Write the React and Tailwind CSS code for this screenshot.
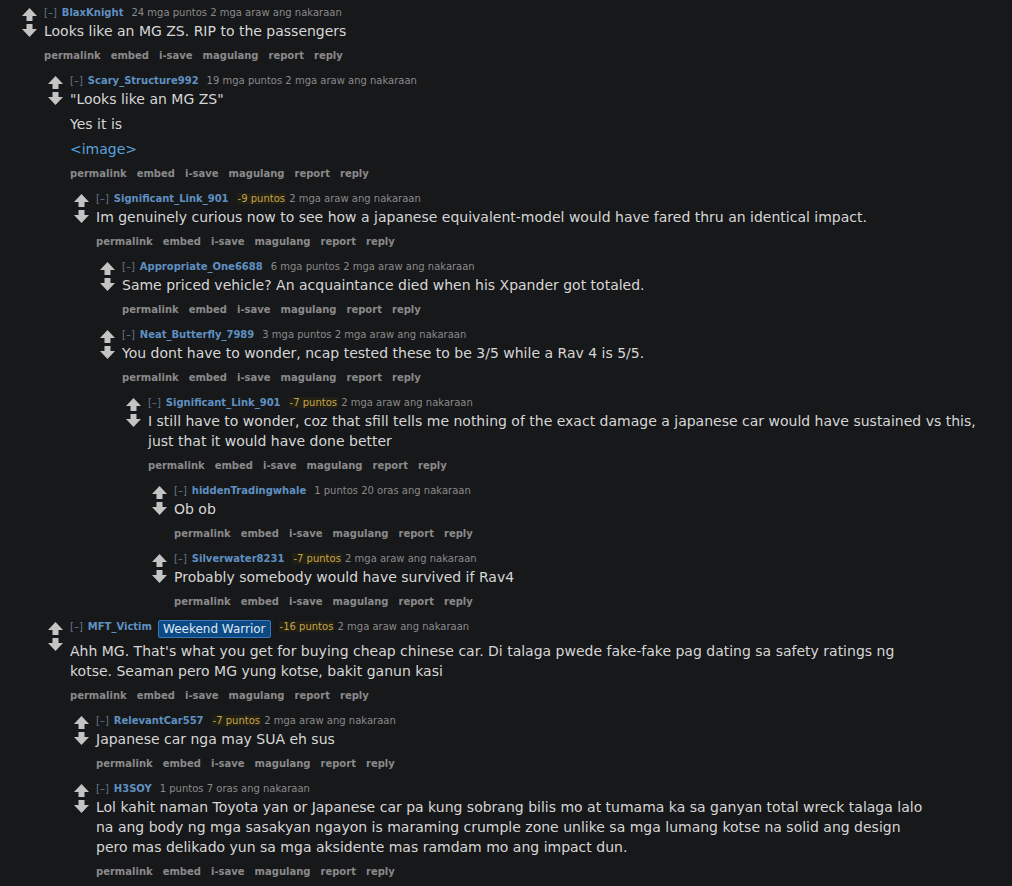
import React from "react";

const INDENT = ["ml-[22px]", "ml-[48px]", "ml-[74px]", "ml-[100px]", "ml-[126px]", "ml-[152px]"];

const comments = [
  {
    level: 0,
    user: "BlaxKnight",
    score: "24 mga puntos",
    time: "2 mga araw ang nakaraan",
    body: ["Looks like an MG ZS. RIP to the passengers"],
  },
  {
    level: 1,
    user: "Scary_Structure992",
    score: "19 mga puntos",
    time: "2 mga araw ang nakaraan",
    body: ['"Looks like an MG ZS"', "Yes it is", { link: "<image>" }],
  },
  {
    level: 2,
    user: "Significant_Link_901",
    score: "-9 puntos",
    neg: true,
    time: "2 mga araw ang nakaraan",
    body: [
      "Im genuinely curious now to see how a japanese equivalent-model would have fared thru an identical impact.",
    ],
  },
  {
    level: 3,
    user: "Appropriate_One6688",
    score: "6 mga puntos",
    time: "2 mga araw ang nakaraan",
    body: ["Same priced vehicle? An acquaintance died when his Xpander got totaled."],
  },
  {
    level: 3,
    user: "Neat_Butterfly_7989",
    score: "3 mga puntos",
    time: "2 mga araw ang nakaraan",
    body: ["You dont have to wonder, ncap tested these to be 3/5 while a Rav 4 is 5/5."],
  },
  {
    level: 4,
    user: "Significant_Link_901",
    score: "-7 puntos",
    neg: true,
    time: "2 mga araw ang nakaraan",
    body: [
      "I still have to wonder, coz that sfill tells me nothing of the exact damage a japanese car would have sustained vs this, just that it would have done better",
    ],
  },
  {
    level: 5,
    user: "hiddenTradingwhale",
    score: "1 puntos",
    time: "20 oras ang nakaraan",
    body: ["Ob ob"],
  },
  {
    level: 5,
    user: "Silverwater8231",
    score: "-7 puntos",
    neg: true,
    time: "2 mga araw ang nakaraan",
    body: ["Probably somebody would have survived if Rav4"],
  },
  {
    level: 1,
    user: "MFT_Victim",
    flair: "Weekend Warrior",
    score: "-16 puntos",
    neg: true,
    time: "2 mga araw ang nakaraan",
    body: [
      "Ahh MG. That's what you get for buying cheap chinese car. Di talaga pwede fake-fake pag dating sa safety ratings ng kotse. Seaman pero MG yung kotse, bakit ganun kasi",
    ],
  },
  {
    level: 2,
    user: "RelevantCar557",
    score: "-7 puntos",
    neg: true,
    time: "2 mga araw ang nakaraan",
    body: ["Japanese car nga may SUA eh sus"],
  },
  {
    level: 2,
    user: "H3SOY",
    score: "1 puntos",
    time: "7 oras ang nakaraan",
    body: [
      "Lol kahit naman Toyota yan or Japanese car pa kung sobrang bilis mo at tumama ka sa ganyan total wreck talaga lalo na ang body ng mga sasakyan ngayon is maraming crumple zone unlike sa mga lumang kotse na solid ang design pero mas delikado yun sa mga aksidente mas ramdam mo ang impact dun.",
    ],
  },
];

function Arrows() {
  return (
    <svg width="15" height="30" viewBox="0 0 15 30" className="mt-[3px] shrink-0" fill="#c4c4c4">
      <polygon points="0,8 7.5,0 15,8" />
      <rect x="4.5" y="8" width="6" height="5" />
      <rect x="4.5" y="16" width="6" height="5" />
      <polygon points="0,21 15,21 7.5,29" />
    </svg>
  );
}

function Comment({ c }) {
  const buttons = ["permalink", "embed", "i-save", "magulang", "report", "reply"];
  return (
    <div className={`${INDENT[c.level]} flex`}>
      <div className="w-[22px] shrink-0">
        <Arrows />
      </div>
      <div className="flex-1 min-w-0">
        <div className="flex items-start text-[10px] leading-[16px] text-[#8a8a8a] whitespace-nowrap">
          <span className="text-[#627789]">[–]</span>
          <span className="ml-[5px] font-bold text-[#5f90c2]">{c.user}</span>
          {c.flair && (
            <span className="ml-[6px] mt-[1px] mb-[3px] h-[18px] px-[4px] flex items-center rounded-[2px] border border-[#3a78b8] bg-[#0c4a86] text-[12px] text-[#dfe8f2]">
              {c.flair}
            </span>
          )}
          <span className="ml-[8px]">
            {c.neg ? (
              <span className="text-[#c7a64a] bg-[#221f14] px-[1px]">{c.score}</span>
            ) : (
              c.score
            )}{" "}
            {c.time}
          </span>
        </div>
        <div className="max-w-[840px] text-[14px] leading-[20px] text-[#d6d6d6]">
          {c.body.map((p, i) =>
            typeof p === "string" ? (
              <p key={i} className={i > 0 ? "mt-[5px]" : ""}>
                {p}
              </p>
            ) : (
              <p key={i} className="mt-[5px] text-[#5aa2dc]">
                {p.link}
              </p>
            )
          )}
        </div>
        <div className="mt-[7px] mb-[9px] flex gap-[10px] text-[10px] leading-[16px] font-bold text-[#8a8a8a]">
          {buttons.map((b) => (
            <span key={b}>{b}</span>
          ))}
        </div>
      </div>
    </div>
  );
}

export default function App() {
  return (
    <div
      className="min-h-screen bg-[#17181a] pt-[5px] overflow-hidden"
      style={{ fontFamily: '"DejaVu Sans", Verdana, sans-serif' }}
    >
      {comments.map((c, i) => (
        <Comment key={i} c={c} />
      ))}
    </div>
  );
}
